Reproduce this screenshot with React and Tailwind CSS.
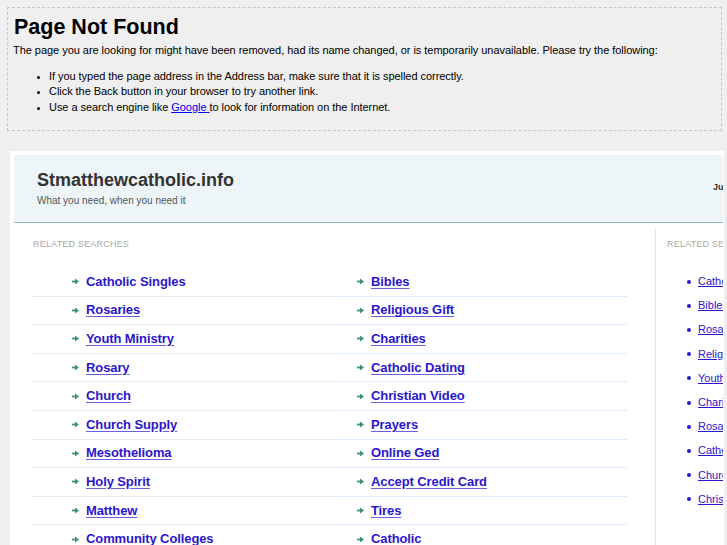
import React from "react";

const pairs = [
  ["Catholic Singles", "Bibles"],
  ["Rosaries", "Religious Gift"],
  ["Youth Ministry", "Charities"],
  ["Rosary", "Catholic Dating"],
  ["Church", "Christian Video"],
  ["Church Supply", "Prayers"],
  ["Mesothelioma", "Online Ged"],
  ["Holy Spirit", "Accept Credit Card"],
  ["Matthew", "Tires"],
  ["Community Colleges", "Catholic"],
];

const side = [
  "Catholic Singles",
  "Bibles",
  "Rosaries",
  "Religious Gift",
  "Youth Ministry",
  "Charities",
  "Rosary",
  "Catholic Dating",
  "Church",
  "Christian Video",
];

function Arrow() {
  return (
    <svg width="7" height="7" viewBox="0 0 7 7" className="shrink-0">
      <rect x="0" y="2.6" width="3.6" height="1.8" fill="#3b8f82" />
      <polygon points="3,0.6 7,3.5 3,6.4" fill="#3b8f82" />
    </svg>
  );
}

function Cell({ text, left, plain }) {
  return (
    <div
      className={`h-[28.6px] flex items-center border-b border-dotted border-[#c9d9ee] ${
        left ? "pl-[39px]" : "pl-[27px]"
      }`}
    >
      <Arrow />
      <a
        href="#"
        className={`ml-[7px] text-[13px] font-bold text-[#2a16cc] leading-[16px] whitespace-nowrap tracking-[-0.1px] ${
          plain ? "no-underline" : "underline decoration-[#6a60dd] underline-offset-[2px]"
        }`}
      >
        {text}
      </a>
    </div>
  );
}

export default function App() {
  return (
    <div className="w-[727px] h-[545px] overflow-hidden bg-[#efefef] font-['Liberation_Sans',Arial,sans-serif] text-black">
      <div className="pt-[7px] pl-[7px]">
        <div className="w-[715px] h-[124px] border border-dashed border-[#c8c8c8] pl-[6px]">
          <h1 className="mt-[7px] text-[21.5px] leading-[25px] font-bold">Page Not Found</h1>
          <p className="mt-[3px] text-[11px] leading-[15px] -ml-[1px] tracking-[-0.04px]">
            The page you are looking for might have been removed, had its name changed, or is temporarily unavailable. Please try the following:
          </p>
          <ul className="mt-[10.5px] pl-[35px] list-disc text-[11px] leading-[15.5px] marker:text-[9px] tracking-[-0.05px]">
            <li>If you typed the page address in the Address bar, make sure that it is spelled correctly.</li>
            <li>Click the Back button in your browser to try another link.</li>
            <li>
              Use a search engine like{" "}
              <a href="#" className="text-[#0000ee] underline">
                Google{" "}
              </a>
              to look for information on the Internet.
            </li>
          </ul>
        </div>
      </div>

      <div className="ml-[10px] mt-[20px] w-[714px] h-[400px] bg-white pt-[4px] pl-[4px] pr-[1px] overflow-hidden">
        <div className="h-[68px] bg-[#eef5f8] border-b border-[#8fb3e3] flex overflow-hidden">
          <div className="w-[699px] shrink-0 pl-[23px] pt-[15px]">
            <div className="text-[18px] leading-[21px] font-bold text-[#333333]">Stmatthewcatholic.info</div>
            <div className="mt-[4px] text-[10px] leading-[12px] text-[#555555]">What you need, when you need it</div>
          </div>
          <div className="shrink-0 pt-[27px] text-[9px] leading-[11px] font-bold text-[#333333] whitespace-nowrap">
            Ju
          </div>
        </div>

        <div className="mt-[6px] flex h-[330px]">
          <div className="w-[641px] shrink-0 pl-[19px] pt-[9.5px]">
            <div className="text-[9px] leading-[11px] text-[#a8a8a8] tracking-[0.2px]">RELATED SEARCHES</div>
            <div className="mt-[18.5px] w-[594px] grid grid-cols-2">
              {pairs.map(([a, b], i) => (
                <React.Fragment key={i}>
                  <Cell text={a} left plain={i === 0} />
                  <Cell text={b} />
                </React.Fragment>
              ))}
            </div>
          </div>
          <div className="flex-1 border-l border-[#d5e3f3] pl-[11px] pt-[9.5px] overflow-hidden">
            <div className="text-[9px] leading-[11px] text-[#a8a8a8] tracking-[0.2px] whitespace-nowrap">RELATED SEARCHES</div>
            <ul className="mt-[20px] pl-[20px]">
              {side.map((s) => (
                <li key={s} className="h-[24.2px] flex items-center whitespace-nowrap">
                  <span className="w-[4px] h-[4px] rounded-full bg-[#2a16cc] shrink-0" />
                  <a href="#" className="ml-[7px] text-[11px] leading-[13px] text-[#2a16cc] underline">
                    {s}
                  </a>
                </li>
              ))}
            </ul>
          </div>
        </div>
      </div>
    </div>
  );
}
